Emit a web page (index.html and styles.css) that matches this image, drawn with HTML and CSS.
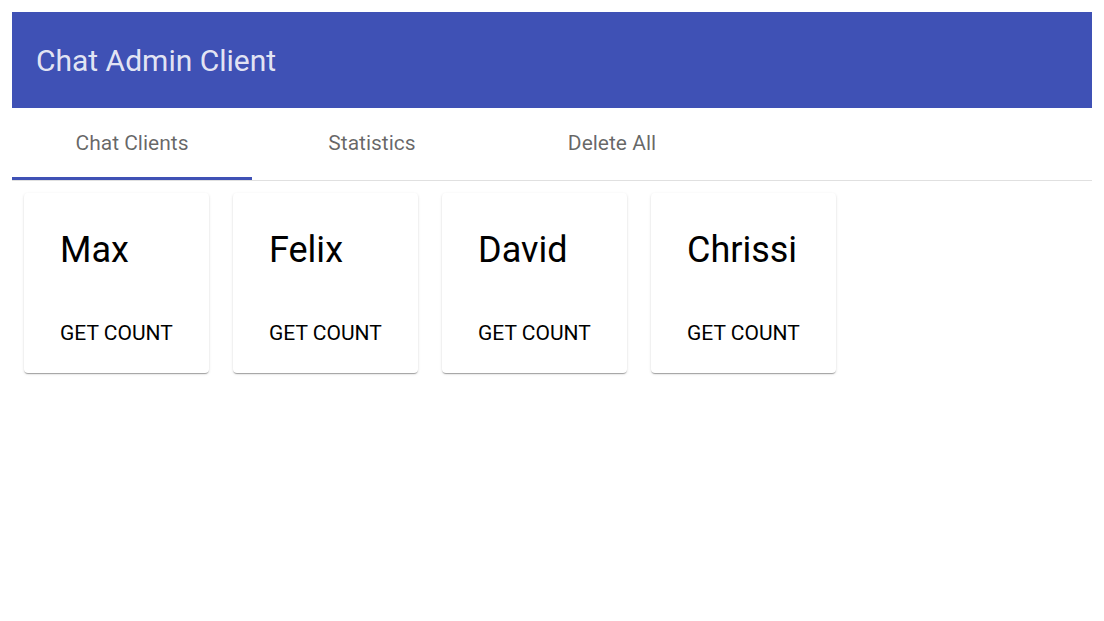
FILE: index.html
```html
<!DOCTYPE html>
<html>
<head>
<meta charset="utf-8">
<link rel="stylesheet" href="styles.css">
</head>
<body>
<div class="app">
  <header class="appbar"><h1 class="title">Chat Admin Client</h1></header>
  <nav class="tabs">
    <div class="tab active">Chat Clients</div>
    <div class="tab">Statistics</div>
    <div class="tab">Delete All</div>
  </nav>
  <main class="cards">
    <div class="card"><div class="name">Max</div><div class="action">GET COUNT</div></div>
    <div class="card"><div class="name">Felix</div><div class="action">GET COUNT</div></div>
    <div class="card"><div class="name">David</div><div class="action">GET COUNT</div></div>
    <div class="card"><div class="name">Chrissi</div><div class="action">GET COUNT</div></div>
  </main>
</div>
</body>
</html>
```
FILE: styles.css
```css
html, body { margin: 0; padding: 0; background: #fff; }
body { font-family: Roboto, "Noto Sans", sans-serif; padding: 12px; }
.appbar {
  background: #3f51b5;
  height: 96px;
  display: flex;
  align-items: center;
  padding: 0 24px;
}
.title {
  margin: 0;
  font-size: 30px;
  font-weight: 400;
  color: rgba(255,255,255,0.87);
}
.tabs {
  display: flex;
  height: 72px;
  border-bottom: 1px solid #e0e0e0;
}
.tab {
  width: 240px;
  display: flex;
  align-items: center;
  justify-content: center;
  font-size: 21px;
  color: rgba(0,0,0,0.6);
  box-sizing: border-box;
  padding-bottom: 3px;
}
.tab.active { border-bottom: 3px solid #3f51b5; padding-bottom: 0; }
.cards {
  display: flex;
  gap: 24px;
  padding: 12px;
}
.card {
  width: 185px;
  height: 180px;
  box-sizing: border-box;
  border-radius: 4px;
  box-shadow: 0 2px 1px -1px rgba(0,0,0,0.2), 0 1px 1px 0 rgba(0,0,0,0.14), 0 1px 3px 0 rgba(0,0,0,0.12);
  padding: 36px 12px 0 36px;
  display: flex;
  flex-direction: column;
}
.name { font-size: 36px; color: #000; line-height: 42px; white-space: nowrap; }
.action { margin-top: 50px; font-size: 21px; font-weight: 400; color: #000; white-space: nowrap; }
```
